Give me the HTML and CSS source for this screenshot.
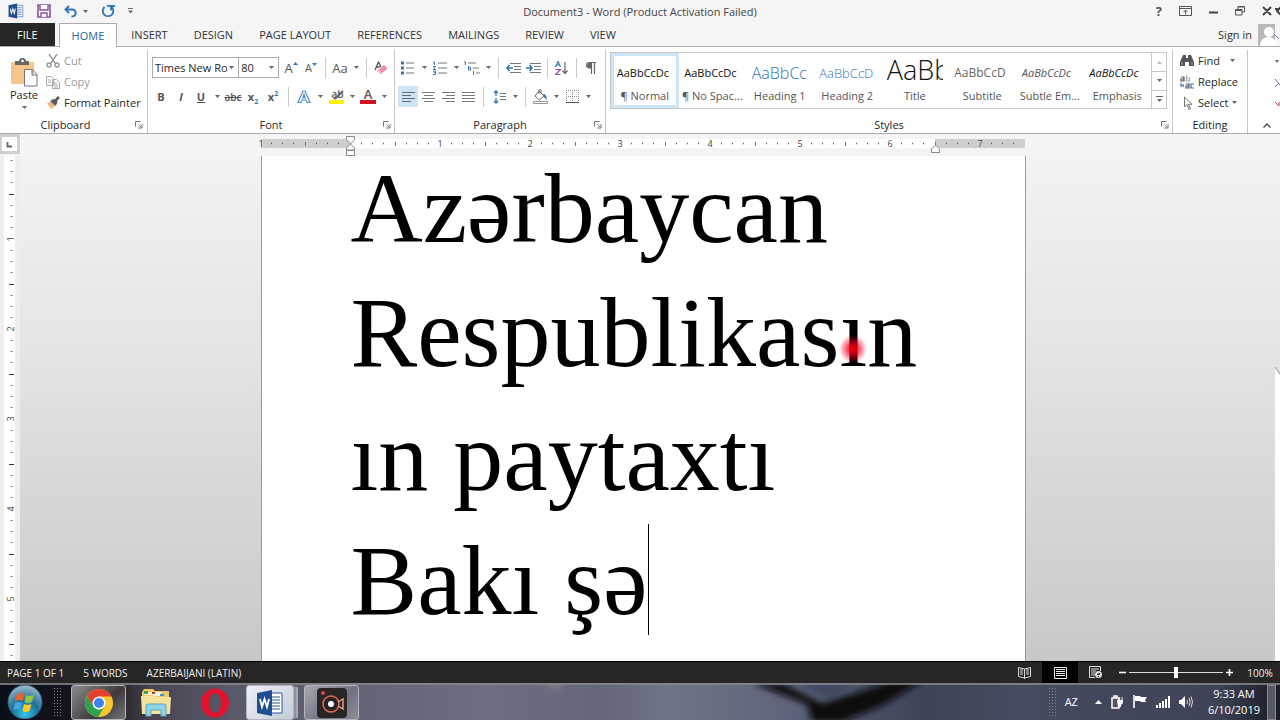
FILE: index.html
```html
<!DOCTYPE html>
<html lang="en">
<head>
<meta charset="utf-8">
<title>Document3 - Word</title>
<link rel="stylesheet" href="styles.css">
</head>
<body>
<svg class="defs" aria-hidden="true">
  <symbol id="caret" viewBox="0 0 5 3"><path d="M0 0h5L2.5 3z" fill="#666"/></symbol>
  <symbol id="launcher" viewBox="0 0 8 8"><path d="M.5 5.500V.5h5M3.500 3.500l3 3M7 3v4H3" fill="none" stroke="#777"/></symbol>
  <symbol id="word" viewBox="0 0 28 28"><path d="M14 4h12v20H14z" fill="#fff" stroke="#2b579a"/><path d="M16 8h8M16 11h8M16 14h8M16 17h8M16 20h8" stroke="#2b579a"/><path d="M1 4l15-3v26L1 24z" fill="#1e4f91"/><path d="M4 10l2 8 2.500-8 2.500 8 2-8" fill="none" stroke="#fff" stroke-width="1.800"/></symbol>
</svg>
<div class="window">
  <header class="titlebar">
    <div class="quick">
      <svg width="16" height="16"><use href="#word"/></svg>
      <button class="plain" aria-label="Save"><svg width="14" height="14" viewBox="0 0 14 14"><path d="M1 1h12v12H1z" fill="#fff" stroke="#8a4fa3" stroke-width="1.600"/><path d="M3 1v5h8V1M4 13V9h6v4" fill="#fff" stroke="#8a4fa3" stroke-width="1.400"/></svg></button>
      <button class="plain undo" aria-label="Undo"><svg width="14" height="13" viewBox="0 0 14 13"><path d="M5 1L1.500 4.500 5 8M2 4.500h6c5 0 5 7-.5 7" fill="none" stroke="#2f78b5" stroke-width="2"/></svg><svg class="caret"><use href="#caret"/></svg></button>
      <button class="plain" aria-label="Repeat"><svg width="14" height="14" viewBox="0 0 14 14"><path d="M4 2.500a5.300 5.300 0 1 0 6.500 .5M4 6.500V2H0M4 1.800h4" fill="none" stroke="#2f78b5" stroke-width="1.800" transform="matrix(-1 0 0 1 14 0)"/></svg></button>
      <button class="plain" aria-label="Customize toolbar"><svg width="5" height="6" viewBox="0 0 5 6"><path d="M0 .5h5" stroke="#666"/><path d="M0 2.500h5L2.500 5.500z" fill="#666"/></svg></button>
    </div>
    <h1 class="title">Document3 - Word (Product Activation Failed)</h1>
    <div class="winbuttons">
      <button class="plain help" aria-label="Help">?</button>
      <button class="plain" aria-label="Ribbon display"><svg width="13" height="10" viewBox="0 0 13 10"><path d="M.5.5h12v9H.5zM.5 2.500h12M6.500 8.500V4.500M4.500 6l2-2 2 2" fill="none" stroke="#555"/></svg></button>
      <button class="plain" aria-label="Minimize"><svg width="9" height="10" viewBox="0 0 9 10"><path d="M0 6.500h9" stroke="#444" stroke-width="2"/></svg></button>
      <button class="plain" aria-label="Restore"><svg width="10" height="10" viewBox="0 0 10 10"><path d="M3 3V.5h6.500V6H7M3 1h6M.5 3.500H7V9H.5zM.5 4.500H7" fill="none" stroke="#555"/></svg></button>
      <button class="plain" aria-label="Close"><svg width="18" height="10" viewBox="0 0 18 10"><path d="M1 1l8 8M9 1L1 9M19 1l-4 4 4 4M13 3h5" fill="none" stroke="#444" stroke-width="2"/></svg></button>
    </div>
  </header>

  <nav class="tabs">
    <a href="#" class="tab file">FILE</a>
    <a href="#" class="tab home">HOME</a>
    <a href="#" class="tab">INSERT</a>
    <a href="#" class="tab">DESIGN</a>
    <a href="#" class="tab">PAGE LAYOUT</a>
    <a href="#" class="tab">REFERENCES</a>
    <a href="#" class="tab">MAILINGS</a>
    <a href="#" class="tab">REVIEW</a>
    <a href="#" class="tab">VIEW</a>
    <a href="#" class="signin">Sign in
      <svg width="22" height="22" viewBox="0 0 22 22"><path d="M0 0h17v22H0z" fill="#b9b9b9"/><circle cx="11" cy="8" r="5" fill="#fff"/><path d="M2 22c0-12 17-12 17 0z" fill="#fff"/><path d="M16 10l5 5" stroke="#7777a8"/></svg></a>
  </nav>

  <section class="ribbon">
    <div class="group clipboard">
      <div class="body">
        <button class="plain paste">
          <svg width="28" height="29" viewBox="0 0 28 29"><path d="M1 4h23v22H1z" fill="#f6c58a"/><path d="M5 3h4c0-4 7-4 7 0h3v4H5z" fill="#666"/><circle cx="12.500" cy="3" r="1.300" fill="#fff"/><path d="M14.500 11.500h8l4.500 5v11.500H14.500zM22 11.500V17h5" fill="#fff" stroke="#777"/></svg>
          <span>Paste</span><svg class="caret"><use href="#caret"/></svg></button>
        <div class="stack">
          <button class="plain dim"><svg width="14" height="14" viewBox="0 0 14 14"><path d="M3 0l6 9M11 0L5 9" stroke="#999" stroke-width="1.500"/><circle cx="3" cy="11" r="2" fill="none" stroke="#999" stroke-width="1.400"/><circle cx="11" cy="11" r="2" fill="none" stroke="#999" stroke-width="1.400"/></svg>Cut</button>
          <button class="plain dim"><svg width="14" height="14" viewBox="0 0 14 14"><path d="M.5 1.500h5l2 2v7h-7zM6.500 4.500h4l3 3v6h-7zM2 5h3M2 7h3M8 8h3M8 10h4M8 12h4" fill="none" stroke="#aaa"/></svg>Copy</button>
          <button class="plain"><svg width="14" height="14" viewBox="0 0 14 14"><path d="M1 7l4-1 4 4-4 3z" fill="#f0bb7c"/><path d="M4 5l3-2 4 5-2 2z" fill="#666"/><path d="M9 5l4-4M7 4l4 3" stroke="#555" stroke-width="2.500"/></svg>Format Painter</button>
        </div>
      </div>
      <footer><span>Clipboard</span><button class="plain launch" aria-label="Clipboard options"><svg width="8" height="8"><use href="#launcher"/></svg></button></footer>
    </div>

    <div class="group font">
      <div class="rows">
        <div class="row">
          <button class="combo name" aria-label="Font name">Times New Ro<svg class="caret"><use href="#caret"/></svg></button>
          <button class="combo size" aria-label="Font size">80<svg class="caret"><use href="#caret"/></svg></button>
          <button class="tool big" aria-label="Grow font">A<svg width="5" height="12" viewBox="0 0 5 12"><path d="M0 3h5L2.500 0z" fill="#2f78b5"/></svg></button>
          <button class="tool small" aria-label="Shrink font">A<svg width="5" height="12" viewBox="0 0 5 12"><path d="M0 1h5L2.500 4z" fill="#2f78b5"/></svg></button>
          <i class="sep"></i>
          <button class="tool big">Aa</button><button class="drop" aria-label="Case options"><svg class="caret"><use href="#caret"/></svg></button>
          <i class="sep"></i>
          <button class="tool" aria-label="Clear formatting"><svg width="14" height="14" viewBox="0 0 14 14"><path d="M1 9l3.500-8L7 6M2.500 6H6" fill="none" stroke="#555" stroke-width="1.300"/><path d="M3 10l7-6 3.500 3.500L7 13z" fill="#ef8ba3"/><path d="M3 10l2-1.700L8.500 12 7 13z" fill="#f7bac8"/></svg></button>
        </div>
        <div class="row">
          <button class="tool"><b>B</b></button>
          <button class="tool"><b><em>I</em></b></button>
          <button class="tool"><b><u>U</u></b></button><button class="drop" aria-label="Underline options"><svg class="caret"><use href="#caret"/></svg></button>
          <button class="tool strike"><s>abc</s></button>
          <button class="tool"><b>x<sub>2</sub></b></button>
          <button class="tool"><b>x<sup>2</sup></b></button>
          <i class="sep wide"></i>
          <button class="tool" aria-label="Text effects"><svg width="14" height="14" viewBox="0 0 14 14"><path d="M1 12.500L6 1h2l5 11.500h-3L9 10H5l-1 2.500zM5.800 8L7 4.500 8.200 8z" fill="#fff" stroke="#4b8fcb" stroke-width="1.200"/></svg></button><button class="drop" aria-label="Effect options"><svg class="caret"><use href="#caret"/></svg></button>
          <button class="tool mark" aria-label="Highlight"><span>ab</span><svg width="15" height="14" viewBox="0 0 15 14"><path d="M14 1L7 8l-2 1" fill="none" stroke="#666" stroke-width="2"/><path d="M0 10h15v4H0z" fill="#fff200"/></svg></button><button class="drop" aria-label="Highlight options"><svg class="caret"><use href="#caret"/></svg></button>
          <button class="tool color">A</button><button class="drop" aria-label="Color options"><svg class="caret"><use href="#caret"/></svg></button>
        </div>
      </div>
      <footer><span>Font</span><button class="plain launch" aria-label="Font options"><svg width="8" height="8"><use href="#launcher"/></svg></button></footer>
    </div>

    <div class="group paragraph">
      <div class="rows">
        <div class="row">
          <button class="tool" aria-label="Bullets"><svg width="14" height="14" viewBox="0 0 14 14"><path d="M5 2h8M5 7h8M5 12h8" stroke="#777"/><path d="M0 .5h3v3H0zM0 5.500h3v3H0zM0 10.500h3v3H0z" fill="#2f78b5"/></svg></button><button class="drop" aria-label="Bullet options"><svg class="caret"><use href="#caret"/></svg></button>
          <button class="tool" aria-label="Numbering"><svg width="14" height="14" viewBox="0 0 14 14"><path d="M5 2h9M5 7h9M5 12h9" stroke="#777"/><path d="M0 1h1.500v3M0 5.500h2.500L.5 8.500H3M0 10h2.500v1.500H1h1.500v2H0" fill="none" stroke="#2f78b5"/></svg></button><button class="drop" aria-label="Numbering options"><svg class="caret"><use href="#caret"/></svg></button>
          <button class="tool" aria-label="Multilevel list"><svg width="16" height="14" viewBox="0 0 16 14"><path d="M4 2h8M9 7h6M12 12h4" stroke="#777"/><path d="M0 1h1.500v3M4.500 5v4h2V6.500h-2M9.500 10v4" fill="none" stroke="#2f78b5"/></svg></button><button class="drop" aria-label="List options"><svg class="caret"><use href="#caret"/></svg></button>
          <i class="sep"></i>
          <button class="tool" aria-label="Decrease indent"><svg width="15" height="12" viewBox="0 0 15 12"><path d="M4 1.500h11M8 4.500h7M8 7.500h7M4 10.500h11" stroke="#777"/><path d="M7 6H1M3.500 3L1 6l2.500 3" fill="none" stroke="#2f78b5" stroke-width="1.600"/></svg></button>
          <button class="tool" aria-label="Increase indent"><svg width="15" height="12" viewBox="0 0 15 12"><path d="M4 1.500h11M8 4.500h7M8 7.500h7M4 10.500h11" stroke="#777"/><path d="M0 6h6M3.500 3L6 6 3.500 9" fill="none" stroke="#2f78b5" stroke-width="1.600"/></svg></button>
          <i class="sep"></i>
          <button class="tool" aria-label="Sort"><svg width="14" height="14" viewBox="0 0 14 14"><path d="M.5 6L3 .5 5.500 6M1.500 4h3" fill="none" stroke="#2f78b5" stroke-width="1.200"/><path d="M.5 8.500h5l-5 5h5" fill="none" stroke="#8a4fa3" stroke-width="1.200"/><path d="M10 1v11M7.500 9.500L10 12.500l2.500-3" fill="none" stroke="#666" stroke-width="1.200"/></svg></button>
          <i class="sep"></i>
          <button class="tool" aria-label="Show marks"><svg width="10" height="12" viewBox="0 0 10 12"><path d="M5 6C-1 6-1 .5 4 .5h6M5.500.5V12M8.500.5V12" fill="none" stroke="#666" stroke-width="1.200"/><path d="M5 6C0 6 0 1 4 1h1z" fill="#666"/></svg></button>
        </div>
        <div class="row">
          <button class="tool on" aria-label="Align left"><svg width="13" height="11" viewBox="0 0 13 11"><path d="M0 1.500h13M0 4.500h9M0 7.500h13M0 10.500h9" stroke="#666"/></svg></button>
          <button class="tool" aria-label="Center"><svg width="13" height="11" viewBox="0 0 13 11"><path d="M0 1.500h13M2 4.500h9M0 7.500h13M2 10.500h9" stroke="#777"/></svg></button>
          <button class="tool" aria-label="Align right"><svg width="13" height="11" viewBox="0 0 13 11"><path d="M0 1.500h13M4 4.500h9M0 7.500h13M4 10.500h9" stroke="#777"/></svg></button>
          <button class="tool" aria-label="Justify"><svg width="13" height="11" viewBox="0 0 13 11"><path d="M0 1.500h13M0 4.500h13M0 7.500h13M0 10.500h13" stroke="#777"/></svg></button>
          <i class="sep wide"></i>
          <button class="tool" aria-label="Line spacing"><svg width="13" height="14" viewBox="0 0 13 14"><path d="M3 1v5M3 8v5M1 3l2-2 2 2M1 11l2 2 2-2" fill="none" stroke="#2f78b5" stroke-width="1.300"/><path d="M7 3.500h6M7 6.500h6M7 9.500h6" stroke="#777"/></svg></button><button class="drop" aria-label="Spacing options"><svg class="caret"><use href="#caret"/></svg></button>
          <i class="sep"></i>
          <button class="tool" aria-label="Shading"><svg width="15" height="15" viewBox="0 0 15 15"><path d="M6 2l5 5-4.500 4L2 7zM6 5V1c0-1 2-1 2 0v3" fill="#fff" stroke="#666"/><path d="M10 5c3 0 4 3 3.500 6L11 8z" fill="#2f78b5"/><path d="M.5 12.500h14v2H.5z" fill="#fff" stroke="#999"/></svg></button><button class="drop" aria-label="Shading options"><svg class="caret"><use href="#caret"/></svg></button>
          <button class="tool" aria-label="Borders"><svg width="13" height="13" viewBox="0 0 13 13"><path d="M.5 0v12M6.500 0v12M12.500 0v12M0 .5h13M0 6.500h13" fill="none" stroke="#888" stroke-dasharray="1 1"/><path d="M0 12.500h13" stroke="#555"/></svg></button><button class="drop" aria-label="Border options"><svg class="caret"><use href="#caret"/></svg></button>
        </div>
      </div>
      <footer><span>Paragraph</span><button class="plain launch" aria-label="Paragraph options"><svg width="8" height="8"><use href="#launcher"/></svg></button></footer>
    </div>

    <div class="group styles">
      <div class="gallery">
        <button class="style picked"><span class="sample">AaBbCcDc</span><span class="label">¶ Normal</span></button>
        <button class="style"><span class="sample">AaBbCcDc</span><span class="label">¶ No Spac...</span></button>
        <button class="style"><span class="sample h1">AaBbCc</span><span class="label">Heading 1</span></button>
        <button class="style"><span class="sample h2">AaBbCcD</span><span class="label">Heading 2</span></button>
        <button class="style"><span class="sample ttl">AaBb</span><span class="label">Title</span></button>
        <button class="style"><span class="sample sub">AaBbCcD</span><span class="label">Subtitle</span></button>
        <button class="style"><span class="sample subtle">AaBbCcDc</span><span class="label">Subtle Em...</span></button>
        <button class="style"><span class="sample emph">AaBbCcDc</span><span class="label">Emphasis</span></button>
        <div class="scroller">
          <button aria-label="Previous styles"><svg width="5" height="3" viewBox="0 0 5 3"><path d="M0 3h5L2.500 0z" fill="#bbb"/></svg></button>
          <button aria-label="Next styles"><svg class="caret"><use href="#caret"/></svg></button>
          <button aria-label="More styles"><svg width="7" height="7" viewBox="0 0 7 7"><path d="M0 .5h7" stroke="#666"/><path d="M1 3h5L3.500 6z" fill="#666"/></svg></button>
        </div>
      </div>
      <footer><span>Styles</span><button class="plain launch" aria-label="Style options"><svg width="8" height="8"><use href="#launcher"/></svg></button></footer>
    </div>

    <div class="group editing">
      <div class="stack">
        <button class="plain"><svg width="14" height="13" viewBox="0 0 14 13"><path d="M3 1h3v3h2V1h3l3 7v4H9V8H5v4H0V8z" fill="#555"/><path d="M2 8v3M12 8v3" stroke="#aaa"/></svg>Find<svg class="caret far"><use href="#caret"/></svg></button>
        <button class="plain replace"><svg width="14" height="14" viewBox="0 0 14 14"><g fill="none" stroke-width="1.200"><path d="M1 2h3v4H1V4h3" stroke="#555"/><path d="M6.500 0v6h3V3h-3" stroke="#aaa"/><path d="M6 9h3v4H6v-2h3" stroke="#555"/><path d="M14 9h-3v4h3M1 8v3h3M2.500 9.500L4 11" stroke="#2f78b5"/></g></svg>Replace</button>
        <button class="plain"><svg width="14" height="14" viewBox="0 0 14 14"><path d="M4.500 1v10l2.500-2.500 2 5 1.500-.7-2-4.500H12z" fill="#fff" stroke="#777"/></svg>Select<svg class="caret"><use href="#caret"/></svg></button>
      </div>
      <footer><span>Editing</span></footer>
    </div>
    <div class="edge">
      <svg width="5" height="54" viewBox="0 0 5 54"><path d="M0 6h4L2 9z" fill="#666"/><path d="M0 25l5 6M0 33l3-3" stroke="#6b6b9e"/><path d="M0 48l4 4V48" fill="none" stroke="#b44"/></svg>
      <button class="plain" aria-label="Collapse ribbon"><svg width="8" height="5" viewBox="0 0 8 5"><path d="M.5 4.500L4 1l3.500 3.500" fill="none" stroke="#555" stroke-width="1.500"/></svg></button>
    </div>
  </section>

  <main class="workspace">
    <button class="corner" aria-label="Tab selector"><svg width="7" height="7" viewBox="0 0 7 7"><path d="M1.500 1v4.500H6" fill="none" stroke="#666" stroke-width="1.800"/></svg></button>
    <div class="hruler">
      <svg width="764" height="22" viewBox="0 0 764 22">
        <defs><pattern id="ht" x="89" y="0" width="90" height="22" patternUnits="userSpaceOnUse"><path d="M11 9.500h1M22 9.500h1M33 9.500h1M56 9.500h1M67 9.500h1M78 9.500h1" stroke="#555" stroke-width="1.500"/><path d="M45.500 8v4" stroke="#777"/></pattern></defs>
        <path d="M0 5h764v9H0z" fill="#cfcfcf"/><path d="M89 5h585v9H89z" fill="#fff"/><path d="M0 0h764v22H0z" fill="url(#ht)"/>
        <g class="nums"><text x="0" y="13">1</text><text x="179" y="13">1</text><text x="269" y="13">2</text><text x="359" y="13">3</text><text x="449" y="13">4</text><text x="539" y="13">5</text><text x="629" y="13">6</text><text x="719" y="13">7</text></g>
        <path d="M85.500 2.500h8v3L89.500 10l4 4v2h-8v-2l4-4-4-4.500zM85.500 16.500h8v5h-8zM670.500 18.500v-3.500l4-4 4 4v3.500z" fill="#fff" stroke="#888"/>
      </svg>
    </div>
    <div class="vruler">
      <svg width="20" height="505" viewBox="0 0 20 505">
        <defs><pattern id="vt" x="0" y="-7" width="20" height="90" patternUnits="userSpaceOnUse"><path d="M10.500 11.500h2M10.500 22.500h2M10.500 33.500h2M10.500 56.500h2M10.500 67.500h2M10.500 78.500h2" stroke="#777"/><path d="M9 45.500h5" stroke="#333"/></pattern></defs>
        <path d="M4 0h11v505H4z" fill="#fff"/><path d="M4 0h11v505H4z" fill="url(#vt)"/>
        <g class="nums"><text transform="translate(14 83) rotate(-90)">1</text><text transform="translate(14 173) rotate(-90)">2</text><text transform="translate(14 263) rotate(-90)">3</text><text transform="translate(14 353) rotate(-90)">4</text><text transform="translate(14 443) rotate(-90)">5</text></g>
      </svg>
    </div>
    <div class="canvas">
      <article class="page" lang="az" contenteditable="true" spellcheck="false"><p>Azərbaycan<br>Respublikas<span class="spot">ı</span>n<br>ın paytaxtı<br>Bakı şə<span class="cursor"></span></p></article>
    </div>
    <div class="gutter"><svg width="5" height="9" viewBox="0 0 5 9"><path d="M0 0h5v7z" fill="#e3e3e3"/><path d="M0 0l5 7" stroke="#888"/></svg></div>
  </main>

  <footer class="status">
    <span>PAGE 1 OF 1</span><span>5 WORDS</span><span>AZERBAIJANI (LATIN)</span>
    <div class="views">
      <button class="plain" aria-label="Read mode"><svg width="13" height="12" viewBox="0 0 13 12"><path d="M.5.500l6 1.500 6-1.500v9l-6 1.500-6-1.500zM6.500 2v10M2 3h3M2 5h3M2 7h3M8 3h3M8 5h3M8 7h3" fill="none" stroke="#ddd"/></svg></button>
      <button class="plain active" aria-label="Print layout"><svg width="13" height="12" viewBox="0 0 13 12"><path d="M.5.500h12v11H.5zM2 2.500h9M2 4.500h9M2 6.500h9M2 8.500h9" fill="none" stroke="#eee"/></svg></button>
      <button class="plain web" aria-label="Web layout"><svg width="14" height="13" viewBox="0 0 14 13"><path d="M6 11.500H.5V.500h11V5M2 3h8M2 5h5M2 7h4M2 9h4" fill="none" stroke="#ddd"/><circle cx="9.500" cy="8.500" r="3.500" fill="#ddd"/><path d="M8 8l2 1 1-2M9 11l1-1" stroke="#333"/></svg></button>
      <button class="plain sign" aria-label="Zoom out"><svg width="7" height="7" viewBox="0 0 7 7"><path d="M0 3.500h7" stroke="#fff" stroke-width="1.600"/></svg></button>
      <input class="zoom" type="range" min="10" max="190" value="100" aria-label="Zoom">
      <button class="plain sign" aria-label="Zoom in"><svg width="7" height="7" viewBox="0 0 7 7"><path d="M0 3.500h7M3.500 0v7" stroke="#fff" stroke-width="1.600"/></svg></button>
      <button class="plain percent">100%</button>
    </div>
  </footer>

  <footer class="taskbar">
    <svg class="wall" viewBox="0 0 1280 37" preserveAspectRatio="none" aria-hidden="true">
      <defs>
        <linearGradient id="sky"><stop offset="0" stop-color="#0b0e19"/><stop offset=".08" stop-color="#17161d"/><stop offset=".12" stop-color="#4a4450"/><stop offset=".18" stop-color="#59596a"/><stop offset=".38" stop-color="#6d6e82"/><stop offset=".47" stop-color="#646679"/><stop offset=".52" stop-color="#707489"/><stop offset=".6" stop-color="#62677d"/><stop offset=".72" stop-color="#3d4458"/><stop offset=".8" stop-color="#454b60"/><stop offset=".95" stop-color="#3e4356"/><stop offset="1" stop-color="#1a1c24"/></linearGradient>
        <filter id="soft" x="-10%" y="-50%" width="120%" height="200%"><feGaussianBlur stdDeviation="3"/></filter>
      </defs>
      <path d="M0 0h1280v37H0z" fill="url(#sky)"/>
      <g filter="url(#soft)"><path d="M752 0h30l40 20 40-12 30-10h30l-40 25-40 16h-30l-5-18z" fill="#07090f"/><path d="M795 0h60l-25 16z" fill="#3c4a60"/><path d="M540 0h25l-8 6z" fill="#94808a"/></g>
      <path d="M0 0h1280v2H0z" fill="#8a8a8a" opacity=".8"/>
    </svg>
    <button class="plain start" aria-label="Start"><svg width="36" height="34" viewBox="0 0 36 34"><defs><radialGradient id="orb" cx=".5" cy=".85" r=".8"><stop offset="0" stop-color="#35c8e8"/><stop offset=".5" stop-color="#1e6e9b"/><stop offset="1" stop-color="#8fb4c4"/></radialGradient></defs><circle cx="18" cy="17" r="17" fill="url(#orb)" stroke="#345a70"/><path d="M10 9q4-2 7 0l-1.500 7q-4-2-7.500 0z" fill="#e8622c"/><path d="M19 10q4 2 8 0l-2 7q-4 2-7.500 0z" fill="#8dc63f"/><path d="M8 18q4-2 7 0l-2 7q-3-2-7 0z" fill="#45a5dd"/><path d="M17 19q4 2 7.500 0l-2 7q-4 2-7 0z" fill="#ffc928"/></svg></button>
    <i class="grip"></i>
    <button class="app open dark" aria-label="Chrome"><svg width="30" height="30" viewBox="0 0 30 30"><circle cx="15" cy="15" r="14" fill="#fbc72f"/><path d="M2.900 8A14 14 0 0 1 27.500 8.500H15L9.400 18.200z" fill="#e2402f"/><path d="M2.900 8a14 14 0 0 0 11.200 21l6.500-10.500A6.500 6.500 0 0 1 9.400 18.200z" fill="#2da14d"/><circle cx="15" cy="15" r="6.500" fill="#fff"/><circle cx="15" cy="15" r="5" fill="#3f82ea"/></svg></button>
    <button class="app" aria-label="Explorer"><svg width="32" height="29" viewBox="0 0 32 29"><path d="M2 4l2-3h9l2 2h14v22H2z" fill="#e9c96c"/><path d="M4 4h9v3H4zM13 4h8v4h-8z" fill="#f7f2dd"/><path d="M4 3h4v3H4z" fill="#45a53d"/><path d="M12 4h3v2h-3z" fill="#c33"/><path d="M20 6h4v2h-4z" fill="#4090cc"/><path d="M1 8h14l2 1h14l-1 17H2z" fill="#f7e29a"/><path d="M6 28V18q0-2 2-2h16q2 0 2 2v10h-5v-6H11v6z" fill="#8fd3e6" stroke="#57a9c5"/></svg></button>
    <button class="app" aria-label="Opera"><svg width="30" height="30" viewBox="0 0 30 30"><path fill-rule="evenodd" d="M15 .5a14 14.500 0 0 1 0 29a14 14.500 0 0 1 0-29zM15 5a6 10 0 0 0 0 20a6 10 0 0 0 0-20z" fill="#e3122d"/></svg></button>
    <button class="app open light" aria-label="Word"><svg width="28" height="28"><use href="#word"/></svg></button>
    <button class="app open" aria-label="Recorder"><svg width="30" height="30" viewBox="0 0 30 30"><rect width="30" height="30" rx="4" fill="#292425"/><circle cx="14" cy="16" r="8" fill="none" stroke="#e36a4c" stroke-width="1.500"/><circle cx="14" cy="16" r="3" fill="#fff"/><path d="M21 14l5-3v10l-5-3" fill="none" stroke="#eea48c" stroke-width="1.400"/><circle cx="6" cy="5" r="2" fill="#e3452f"/></svg></button>
    <div class="tray">
      <i class="grip"></i>
      <span class="lang">AZ</span>
      <svg width="7" height="4" viewBox="0 0 7 4"><path d="M0 4h7L3.500 0z" fill="#fff"/></svg>
      <svg width="13" height="14" viewBox="0 0 13 14"><path d="M1 3h7v10H1zM3 1h3v2H3z" fill="#555" stroke="#fff" stroke-width="1.500"/><path d="M6 5h6v3l-2 2v2H7" fill="#fff"/><path d="M8 2v3M11 2v3" stroke="#fff"/></svg>
      <svg width="14" height="13" viewBox="0 0 14 13"><path d="M1 0v13" stroke="#fff" stroke-width="1.600"/><path d="M2 1h5l1 1h6l-2 3 1 2H8L7 6H2z" fill="#fff"/></svg>
      <svg width="14" height="12" viewBox="0 0 14 12"><path d="M0 9h2v3H0zM3 7h2v5H3zM6 5h2v7H6zM9 3h2v9H9zM12 0h2v12h-2z" fill="#fff"/></svg>
      <svg width="14" height="14" viewBox="0 0 14 14"><path d="M0 5h2l4-4v12L2 9H0z" fill="#fff"/><path d="M8 5q1 2 0 4M10 3q2.500 4 0 8M12 1.500q3 5.500 0 11" fill="none" stroke="#ddd"/></svg>
      <time class="clock"><span>9:33 AM</span><span>6/10/2019</span></time>
      <button class="desktop" aria-label="Show desktop"></button>
    </div>
  </footer>
</div>
</body>
</html>
```
FILE: styles.css
```css
* { box-sizing: border-box; }
body { margin: 0; font-family: "Open Sans", "Noto Sans", sans-serif; font-size: 11px; line-height: 16px; color: #333; }
button { font: inherit; color: inherit; margin: 0; padding: 0; border: 0; background: none; }
a { color: inherit; text-decoration: none; }
svg { display: block; flex: none; }
.defs { display: none; }
.caret { width: 5px; height: 3px; }
.plain { display: flex; align-items: center; justify-content: center; }
.window { display: flex; flex-direction: column; height: 100vh; overflow: hidden; background: #f5f5f5; }

.titlebar { display: grid; grid-template-columns: 1fr auto 1fr; align-items: center; height: 22px; flex: none; }
.quick { display: flex; align-items: center; gap: 13px; padding: 0 8px; }
.quick .undo { gap: 5px; }
.title { margin: 0; padding-top: 2px; font-size: 11px; font-weight: 400; color: #444; }
.winbuttons { display: flex; align-items: center; justify-content: flex-end; gap: 17px; color: #555; }
.help { font-weight: 700; font-size: 13px; }

.tabs { display: flex; height: 25px; flex: none; align-items: stretch; border-bottom: 1px solid #ababab; padding-top: 1px; }
.tab { display: flex; align-items: center; padding: 0 13px; color: #333; }
.file { background: #262626; color: #fff; padding: 0 17px; margin-right: 4px; }
.home { background: #fff; color: #2a6496; border: 1px solid #ababab; border-bottom: 0; margin-bottom: -1px; padding: 0 12px; margin-right: 1px; }
.signin { display: flex; align-items: center; gap: 6px; margin-left: auto; }

.ribbon { display: flex; height: 87px; flex: none; background: #fff; border-bottom: 1px solid #ababab; padding: 3px 0 0; color: #262626; }
.group { display: flex; flex-direction: column; flex: none; border-right: 1px solid #c4c4c4; }
.group footer { display: grid; grid-template-columns: 1fr auto 1fr; align-items: center; margin-top: auto; padding: 0 3px; height: 16px; flex: none; }
.group footer span { grid-column: 2; }
.launch { justify-self: end; }
.clipboard { width: 148px; }
.clipboard footer { padding: 0 4px 0 0; margin-left: -12px; }
.body { display: flex; gap: 8px; padding-left: 10px; }
.paste { flex-direction: column; width: 28px; padding-top: 3px; }
.paste .caret { margin-top: 3px; }
.stack { display: flex; flex-direction: column; align-items: flex-start; }
.stack button { height: 21px; gap: 4px; white-space: nowrap; }
.dim { color: #999; }
.font { width: 247px; }
.paragraph { width: 211px; }
.rows { display: flex; flex-direction: column; gap: 8px; padding: 7px 3px 0; }
.row { display: flex; align-items: center; height: 21px; }
.tool { display: flex; align-items: center; justify-content: center; width: 20px; height: 21px; flex: none; color: #555; }
.big { font-size: 13px; }
.small { font-size: 11px; }
.drop { display: flex; align-items: center; justify-content: center; width: 12px; height: 21px; flex: none; }
.sep { width: 1px; height: 20px; margin: 0 4px; background: #ccc; flex: none; }
.sep.wide { margin: 0 5px; }
.combo { display: flex; align-items: center; justify-content: space-between; height: 21px; border: 1px solid #ababab; padding: 0 4px 0 2px; background: #fff; white-space: nowrap; }
.name { width: 88px; margin-left: 1px; }
.size { width: 40px; border-left: 0; margin-right: 2px; }
.strike { font-size: 10px; font-weight: 600; }
sub, sup { font-size: 7px; line-height: 0; color: #2f78b5; }
.mark { display: grid; }
.mark > * { grid-area: 1 / 1; }
.mark span { font-size: 10px; line-height: 10px; font-weight: 600; align-self: start; justify-self: start; padding: 3px 0 0 3px; }
.mark svg { justify-self: center; }
.color { font-size: 13px; font-weight: 600; height: 15px; width: 16px; margin: 0 2px; line-height: 11px; border-bottom: 4px solid #d2101e; }
.on { background: #cde6f7; }

.styles { flex: 1; min-width: 0; }
.gallery { display: grid; grid-template-columns: repeat(8, minmax(0, 1fr)) 15px; height: 57px; margin: 2px 5px 0 4px; border: 1px solid #c6c6c6; }
.style { display: flex; flex-direction: column; align-items: center; justify-content: space-between; overflow: hidden; border: 3px solid transparent; padding: 0 3px; color: #111; }
.picked { border-color: #cde6f7; }
.sample { display: flex; align-items: center; width: 56px; height: 28px; padding-top: 6px; overflow: hidden; white-space: nowrap; }
.label { color: #555; white-space: nowrap; line-height: 18px; }
.h1 { font-size: 16px; font-weight: 300; color: #2e74b5; }
.h2 { font-size: 13px; font-weight: 300; color: #2e74b5; }
.ttl { font-size: 27px; font-weight: 300; padding: 0; line-height: 24px; }
.sub { color: #666; font-size: 12px; }
.subtle { font-style: italic; color: #555; }
.emph { font-style: italic; }
.scroller { display: grid; grid-template-rows: repeat(3, 1fr); border-left: 1px solid #c6c6c6; }
.scroller button { display: flex; align-items: center; justify-content: center; }
.scroller button + button { border-top: 1px solid #c6c6c6; }
.editing { width: 75px; padding-left: 7px; }
.editing footer { padding: 0 7px 0 0; }
.far { margin-left: 6px; }
.edge { display: flex; flex-direction: column; justify-content: space-between; align-items: flex-end; width: 32px; padding: 4px 0; }
.edge button { margin-right: 9px; height: 8px; }

.workspace { flex: 1; min-height: 0; display: grid; grid-template: 22px minmax(0, 1fr) / 20px minmax(0, 1fr) 5px; background: linear-gradient(#f5f5f5, #e4e4e4 42%, #c8c8c8); }
.corner { width: 20px; height: 20px; border: 3px solid #d0d0d0; border-left-width: 2px; background: #fff; display: flex; align-items: center; justify-content: center; }
.hruler { display: flex; justify-content: center; overflow: hidden; grid-column: 2 / 4; padding-right: 14px; }
.hruler svg { overflow: visible; }
.nums { font-size: 9px; fill: #444; text-anchor: middle; }
.vruler { overflow: hidden; background: #eee; }
.canvas { display: flex; justify-content: center; align-items: stretch; overflow: hidden; padding-right: 9px; }
.page { width: 765px; background: #fff; border: solid #999; border-width: 0 1px; padding: 0 89px; overflow: hidden; outline: 0; }
.page p { margin: -9px 0 0; font: 100px/124px "Liberation Serif", "Times New Roman", serif; color: #000; white-space: nowrap; }
.cursor { display: inline-block; width: 1px; height: 111px; margin: -20px 0; vertical-align: -1px; background: #000; }
.spot { position: relative; }
.spot::after { content: ""; position: absolute; left: 0; top: 58px; width: 28px; height: 28px; background: radial-gradient(circle closest-side, rgba(240, 0, 10, .95) 15%, rgba(240, 0, 40, .6) 50%, rgba(255, 0, 50, 0)); }
.gutter { background: #fff; margin-top: 211px; }

.status { display: flex; align-items: center; gap: 19px; height: 22px; flex: none; background: #262626; border-top: 1px solid #000; color: #f0f0f0; padding: 0 7px; font-size: 10px; }
.views { display: flex; align-items: center; margin-left: auto; height: 21px; }
.views button { width: 36px; height: 21px; }
.views .active { background: #000; }
.views .web { margin-right: 3px; }
.views .sign { width: 11px; }
.views .percent { width: 26px; margin-left: 12px; }
.zoom { appearance: none; width: 94px; height: 12px; margin: 0 1px; background: linear-gradient(#ddd, #ddd) center / 100% 1px no-repeat; }
.zoom::-webkit-slider-thumb { appearance: none; width: 4px; height: 11px; background: #fff; }

.taskbar { position: relative; isolation: isolate; display: flex; align-items: center; height: 37px; flex: none; color: #fff; padding-left: 7px; }
.wall { position: absolute; inset: 0; width: 100%; height: 100%; z-index: -1; }
.start { margin-right: 10px; }
.grip { width: 8px; height: 30px; background: radial-gradient(circle, #83838c 30%, transparent 40%) 0 0 / 3px 3px; margin-right: 10px; flex: none; }
.app { display: flex; align-items: center; justify-content: center; width: 59px; height: 35px; margin-top: 2px; }
.open { width: 55px; border: 1px solid #b5b5bd; border-radius: 3px; background: linear-gradient(135deg, #a5a7b3, #70727f 60%, #8b8d99); }
.dark { background: linear-gradient(135deg, #8c8c8e, #3e3a3c 60%, #77747a); }
.light { width: 48px; margin-left: 2px; margin-right: 10px; background: linear-gradient(135deg, #eef0f5, #c4cbd8); box-shadow: 3px 0 0 -1px #8c8e9c, 6px 0 0 -2px #a6a8b3; }
.tray { display: flex; align-items: center; gap: 9px; margin-left: auto; height: 100%; padding-right: 4px; }
.tray .grip { margin-right: 0; }
.lang { margin-right: 8px; }
.clock { display: flex; flex-direction: column; align-items: center; margin-left: 6px; }
.desktop { width: 9px; height: 35px; margin-top: 2px; margin-left: -2px; border: 1px solid #888; background: #555a68; }
```
